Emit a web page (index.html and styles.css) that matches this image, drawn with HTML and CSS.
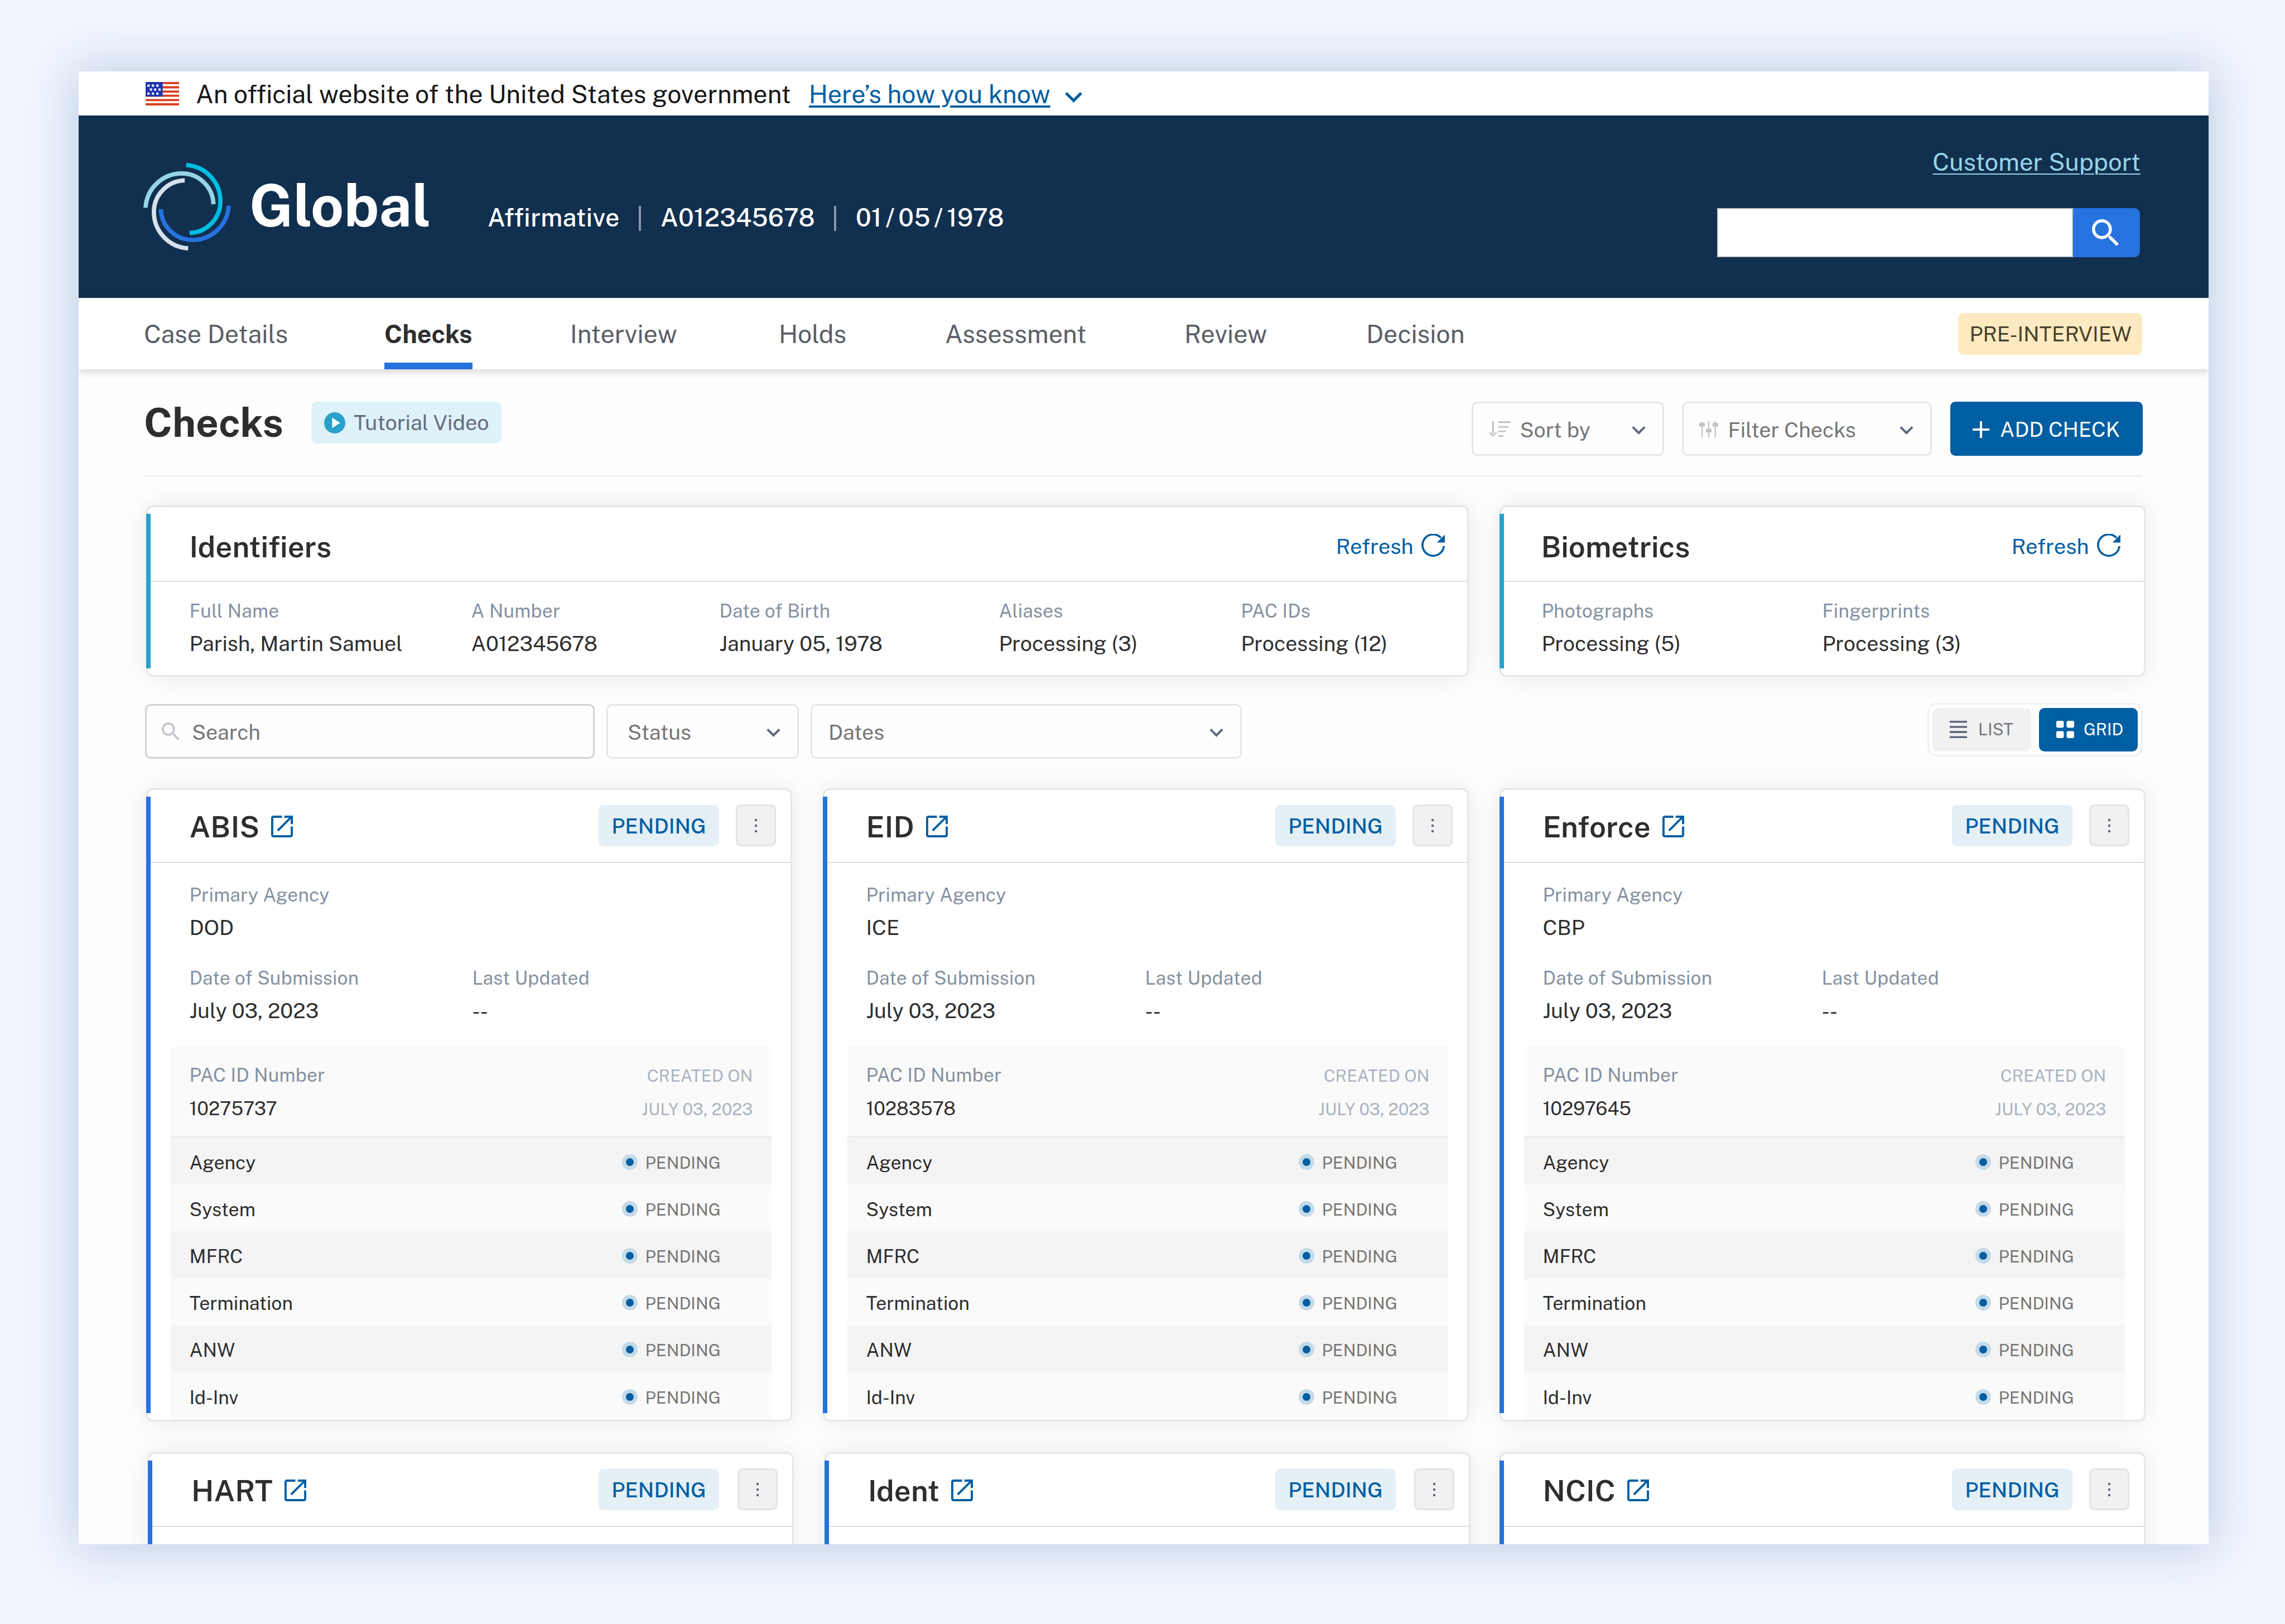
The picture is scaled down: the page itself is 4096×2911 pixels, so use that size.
FILE: index.html
```html
<!DOCTYPE html>
<html lang="en">
<head>
<meta charset="utf-8">
<title>Global – Checks</title>
<link rel="stylesheet" href="styles.css">
</head>
<body>
<svg class="defs" width="0" height="0" aria-hidden="true">
  <symbol id="chevron" viewBox="6 8.59 12 7.41"><path d="M16.59 8.59 12 13.17 7.41 8.59 6 10l6 6 6-6z"/></symbol>
  <symbol id="search" viewBox="3 3 17.49 17.49"><path d="M15.5 14h-.79l-.28-.27A6.47 6.47 0 0 0 16 9.5 6.5 6.5 0 1 0 9.5 16c1.61 0 3.09-.59 4.23-1.57l.27.28v.79l5 4.99L20.49 19l-4.99-5zm-6 0C7.01 14 5 11.99 5 9.5S7.01 5 9.5 5 14 7.01 14 9.5 11.99 14 9.5 14z"/></symbol>
  <symbol id="launch" viewBox="3 3 18 18"><path d="M19 19.200H4.800V4.800H12V3H5a2 2 0 0 0-2 2v14a2 2 0 0 0 2 2h14c1.1 0 2-.9 2-2v-7h-1.800v7zM14 3v1.800h3.790l-10 10 1.270 1.270 10.140-10.140V10H21V3h-7z"/></symbol>
  <symbol id="refresh" viewBox="0 0 46 46"><path d="M38.5 7.7A21 21 0 1 0 44 24" fill="none" stroke="currentColor" stroke-width="4"/><path d="M46 1.3V17H30.3z"/></symbol>
  <symbol id="stripes" viewBox="0 0 60 42">
    <path fill="#fff" d="M0 0h60v42H0z"/>
    <path fill="#db3e1f" d="M0 0h60v3.8H0zM0 7.6h60v3.8H0zM0 15.2h60V19H0zM0 22.8h60v3.8H0zM0 30.4h60v3.8H0zM0 38h60v4H0z"/>
    <path fill="#1e33b1" d="M0 0h30.5v26H0z"/>
    <path fill="#fff" d="M3.2 4.5h4v4h-4zM11.2 4.5h4v4h-4zM19.2 4.5h4v4h-4zM7.6 11.5h4v4h-4zM15.2 11.5h4v4h-4zM23 11.5h4v4h-4zM3.2 18.7h4v4h-4zM11.2 18.7h4v4h-4zM19.2 18.7h4v4h-4z"/>
  </symbol>
  <symbol id="arc" viewBox="0 0 175.4 175.4"><path d="M85.6 4.4A72.6 72.6 0 0 1 154.3 77 63.3 63.3 0 0 1 92.6 140.3" fill="none" stroke="currentColor" stroke-width="8.6"/></symbol>
</svg>

<div class="window">
  <div class="banner">
    <svg class="flag"><use href="#stripes"/></svg>
    <span>An official website of the United States government</span>
    <a class="banner-link">Here’s how you know</a>
    <svg class="chevron banner-chevron"><use href="#chevron"/></svg>
  </div>

  <header class="header">
    <svg class="logo" viewBox="0 0 175.4 175.4">
      <g color="#00bde3"><use href="#arc" width="175.4" height="175.4"/></g>
      <g color="#97d4ea" transform="rotate(-90 87.7 87.7)"><use href="#arc" width="175.4" height="175.4"/></g>
      <g color="#d5e1ed" transform="rotate(180 87.7 87.7)"><use href="#arc" width="175.4" height="175.4"/></g>
      <g color="#2672de" transform="rotate(90 87.7 87.7)"><use href="#arc" width="175.4" height="175.4"/></g>
    </svg>
    <div class="brand">Global</div>
    <div class="meta"><span>Affirmative</span><i></i><span>A012345678</span><i></i><span>01<b>/</b>05<b>/</b>1978</span></div>
    <div class="tools">
      <a class="support">Customer Support</a>
      <div class="site-search"><div class="site-input"></div><div class="site-button"><svg><use href="#search"/></svg></div></div>
    </div>
  </header>

  <nav class="nav">
    <div class="tabs">
      <a>Case Details</a><a class="active">Checks</a><a>Interview</a><a>Holds</a><a>Assessment</a><a>Review</a><a>Decision</a>
    </div>
    <span class="stage">PRE-INTERVIEW</span>
  </nav>

  <main class="main">
    <div class="heading">
      <h1>Checks</h1>
      <a class="tutorial"><svg viewBox="0 0 38 38"><circle cx="19" cy="19" r="19" fill="#29a1cd"/><path fill="#fff" d="M14.5 9.5 28.5 19l-14 9.5z"/></svg>Tutorial Video</a>
      <div class="controls">
        <div class="select sort"><svg class="sort-icon" viewBox="129 135 129 96"><path d="M147.500 135h11v76h-11zM185 135h73v10.500h-73zM185 164h60v10.500h-60zM185 191h45v10.500h-45zM185 219h31v10.500h-31z"/><path d="M132 203l21 21 21-21" fill="none" stroke="#c2c6ca" stroke-width="9"/></svg><span>Sort by</span><svg class="chevron"><use href="#chevron"/></svg></div>
        <div class="select filter"><svg class="filter-icon" viewBox="1387 132 114 99"><path d="M1400 132h8v99h-8zM1440 132h8v99h-8zM1480 132h8v99h-8z"/><rect x="1387" y="142" width="34" height="23" rx="4"/><rect x="1427" y="177" width="34" height="23" rx="4"/><rect x="1467" y="142" width="34" height="23" rx="4"/></svg><span>Filter Checks</span><svg class="chevron"><use href="#chevron"/></svg></div>
        <div class="add"><svg viewBox="0 0 30 30"><path d="M13 0h4v13h13v4H17v13h-4V17H0v-4h13z"/></svg>ADD CHECK</div>
      </div>
    </div>

    <div class="summary">
      <section class="card info ids">
        <div class="info-head"><h2>Identifiers</h2><a class="refresh">Refresh<svg><use href="#refresh"/></svg></a></div>
        <div class="info-body">
          <dl><dt>Full Name</dt><dd>Parish, Martin Samuel</dd></dl>
          <dl><dt>A Number</dt><dd>A012345678</dd></dl>
          <dl><dt>Date of Birth</dt><dd>January 05, 1978</dd></dl>
          <dl><dt>Aliases</dt><dd>Processing (3)</dd></dl>
          <dl><dt>PAC IDs</dt><dd>Processing (12)</dd></dl>
        </div>
      </section>
      <section class="card info bio">
        <div class="info-head"><h2>Biometrics</h2><a class="refresh">Refresh<svg><use href="#refresh"/></svg></a></div>
        <div class="info-body">
          <dl><dt>Photographs</dt><dd>Processing (5)</dd></dl>
          <dl><dt>Fingerprints</dt><dd>Processing (3)</dd></dl>
        </div>
      </section>
    </div>

    <div class="bar">
      <div class="search"><svg><use href="#search"/></svg><span>Search</span></div>
      <div class="select status"><span>Status</span><svg class="chevron"><use href="#chevron"/></svg></div>
      <div class="select dates"><span>Dates</span><svg class="chevron"><use href="#chevron"/></svg></div>
      <div class="toggle">
        <div class="view"><svg viewBox="0 0 31 31"><path d="M0 0h31v3.600H0zM0 9.200h31v3.600H0zM0 18.300h31v3.600H0zM0 27.400h31V31H0z"/></svg>LIST</div>
        <div class="view on"><svg viewBox="0 0 32 31"><rect width="13.500" height="12.500" rx="3"/><rect x="18.500" width="13.500" height="12.500" rx="3"/><rect y="18.500" width="13.500" height="12.500" rx="3"/><rect x="18.500" y="18.500" width="13.500" height="12.500" rx="3"/></svg>GRID</div>
      </div>
    </div>

    <div class="cards" id="cards"></div>
  </main>
</div>
<script src="cards.js"></script>
</body>
</html>
```

FILE: styles.css
```css
* { box-sizing: border-box; }
body {
  margin: 0;
  height: 2911px;
  padding-top: 128px;
  overflow: hidden;
  background: #eff4fd;
  font-family: "Public Sans", Inter, "Liberation Sans", sans-serif;
  font-size: 37.5px;
  line-height: 44px;
  color: #2e2e2e;
}
h1, h2, dl, dt, dd { margin: 0; font-weight: inherit; }
svg { display: block; flex: none; fill: currentColor; }
span, a { white-space: nowrap; }
.defs { position: absolute; }

.window {
  width: 3818px;
  height: 2640px;
  margin-left: 141px;
  overflow: hidden;
  background: #fefefe;
  box-shadow: 0 0 80px rgba(0, 71, 146, .24);
}

.banner {
  height: 79px;
  padding: 2px 0 0 120px;
  display: flex;
  align-items: center;
  background: #fff;
  font-size: 44.7px;
  color: #171717;
}
.flag { width: 60px; height: 42px; margin: -1px 30px 0 0; }
.banner-link {
  margin: 0 26px 0 32px;
  color: #005ea2;
  text-decoration: underline;
  text-decoration-thickness: 4px;
  text-underline-offset: 4px;
}
.chevron { width: 25px; height: 15px; margin: 4px 0 0 auto; color: #5f6780; }
.banner .banner-chevron { width: 31px; height: 19px; margin: 11px 0 0; color: #005ea2; }

.header {
  height: 327px;
  padding: 0 123px 0 116px;
  display: flex;
  align-items: flex-start;
  background: #112f4e;
  color: #fff;
}
.logo { width: 157px; height: 157px; margin: 85px 33px 0 0; overflow: visible; }
.brand { width: 427px; margin-top: 109px; font-size: 103.8px; line-height: 104px; font-weight: 700; }
.meta {
  margin-top: 160px;
  display: flex;
  align-items: center;
  gap: 34.500px;
  font-size: 44.7px;
  line-height: 45px;
  font-weight: 500;
  letter-spacing: .35px;
}
.meta i { width: 4px; height: 45px; margin-top: 2px; background: #8897a7; }
.meta b { font-weight: 500; margin: 0 6.500px; }
.tools { width: 758px; margin: 62px 0 0 auto; display: flex; flex-direction: column; align-items: flex-end; gap: 60px; }
.support {
  font-size: 43.6px;
  line-height: 44px;
  margin-right: -1px;
  color: #97d4ea;
  text-decoration: underline;
  text-decoration-thickness: 2px;
  text-underline-offset: 5px;
}
.site-search { width: 100%; height: 88px; display: flex; }
.site-input { flex: 1; background: #fff; border: 2px solid #c9c9c9; }
.site-button { width: 120px; padding-left: 34px; display: flex; align-items: center; background: #2672de; border-radius: 0 10px 10px 0; }
.site-button svg { width: 48px; height: 48px; }

.nav {
  position: relative;
  height: 128px;
  padding: 0 119px 0 117px;
  display: flex;
  justify-content: space-between;
  align-items: center;
  background: #fff;
  box-shadow: 0 6px 12px rgba(0, 0, 0, .14);
}
.tabs {
  height: 128px;
  display: grid;
  grid-template-columns: 431px 333px 374px 298px 429px 326px auto;
  justify-items: start;
  font-size: 44.8px;
  line-height: 45px;
  color: #5a5e68;
}
.tabs a { padding-top: 42px; }
.tabs .active { font-weight: 700; color: #2e2e2e; border-bottom: 12px solid #2672de; }
.stage {
  height: 75px;
  padding: 0 19px 0 20.500px;
  font-size: 37.6px;
  line-height: 75px;
  background: #feeac1;
  color: #47412b;
  border-radius: 10px;
}

.main { padding: 0 119px 0 117px; }
.heading { height: 192px; padding-top: 58px; display: flex; align-items: flex-start; border-bottom: 2px solid #e6e6e6; }
h1 { width: 300px; margin-top: 1px; font-size: 71px; line-height: 73px; font-weight: 700; }
.tutorial {
  height: 75px;
  padding: 0 22px 0 23px;
  display: flex;
  align-items: center;
  gap: 15px;
  border-radius: 10px;
  background: #dff1f9;
  color: #646a80;
  font-size: 37.8px;
}
.tutorial svg { width: 38px; height: 38px; }
.controls { margin: 0 -1px 0 auto; display: flex; }
.select {
  height: 97px;
  display: flex;
  align-items: center;
  padding: 2px 30px 0 28px;
  border: 3px solid #e6e6e6;
  border-radius: 10px;
  background: #fefefe;
  color: #757575;
}
.sort { width: 345px; margin-right: 31.500px; }
.filter { width: 448px; margin-right: 33.500px; }
.sort-icon { width: 38.500px; height: 28.700px; margin-right: 17px; color: #c2c6ca; }
.filter-icon { width: 34px; height: 29.500px; margin-right: 18px; color: #c2c6ca; }
.add {
  width: 345px;
  height: 97px;
  padding: 2px 0 0 40px;
  display: flex;
  align-items: center;
  gap: 19px;
  border-radius: 9px;
  background: #005ea2;
  color: #fff;
  font-size: 37.2px;
}
.add svg { width: 30px; height: 30px; }

.summary, .cards {
  margin: 51.500px -5.500px 0 3.500px;
  display: grid;
  grid-template-columns: repeat(3, 1158px);
  justify-content: space-between;
}
.card {
  position: relative;
  border: 3px solid #e6e6e6;
  border-radius: 12px;
  background: #fff;
  box-shadow: 0 0 48px rgba(0, 0, 0, .09);
}
.card::before { content: ""; position: absolute; left: -3px; top: 12px; bottom: 12px; width: 8px; background: #2672de; }
.info { height: 307px; }
.info::before { background: #29a1cd; }
.ids { grid-column: span 2; }
.info-head {
  height: 134px;
  padding: 10px 40px 0 75px;
  display: flex;
  justify-content: space-between;
  align-items: center;
  border-bottom: 2px solid #dcdee0;
}
.bio .info-head { padding: 10px 42px 0 72px; }
h2 { font-size: 52.6px; line-height: 60px; font-weight: 600; letter-spacing: .05px; }
.refresh { display: flex; align-items: center; gap: 14px; color: #005ea2; font-size: 38.2px; }
.refresh svg { width: 42px; height: 42px; margin-top: -4px; }
.info-body { padding: 32px 0 0 75px; display: grid; grid-template-columns: 505px 445px 501px 434px auto; }
.bio .info-body { padding-left: 73px; grid-template-columns: 503px auto; }
dt { margin-bottom: 16px; font-size: 33.6px; line-height: 40px; letter-spacing: .2px; color: #8591a0; }
dd { white-space: nowrap; }

.bar { height: 98px; margin: 49px -1px 0 2px; display: flex; }
.search {
  width: 806px;
  padding: 3px 0 0 27px;
  display: flex;
  align-items: center;
  gap: 22px;
  border: 3px solid #d1d1d1;
  border-radius: 10px;
  color: #757575;
}
.search svg { width: 32px; height: 32px; margin-top: -2px; color: #c2c6ca; }
.bar .select { height: 98px; }
.status { width: 345px; margin: 0 21px; padding-left: 35px; }
.bar .dates { width: 773px; padding-left: 29px; }
.toggle {
  width: 386px;
  height: 96px;
  margin: -2px 0 0 auto;
  padding: 0 6px;
  display: flex;
  justify-content: space-between;
  align-items: center;
  border: 3px solid #f1f1f1;
  border-radius: 16px;
}
.view {
  width: 177px;
  height: 78px;
  padding: 1px 0 0 31px;
  display: flex;
  align-items: center;
  gap: 20px;
  border-radius: 10px;
  background: #f1f1f1;
  color: #757575;
  font-size: 29.8px;
}
.view svg { width: 31px; height: 31px; margin-top: -1px; color: #5f6780; }
.view.on { gap: 17px; background: #005ea2; color: #fff; }
.view.on svg { width: 32px; color: #fff; }

.cards { margin-top: 53.500px; row-gap: 55px; }
.check { height: 1135px; overflow: visible; }
.check-head {
  height: 131px;
  padding: 2px 26px 0 75px;
  display: flex;
  align-items: center;
  border-bottom: 2px solid #dcdee0;
}
.launch { width: 39px; height: 39px; margin: 0 auto 0 21px; color: #005ea2; }
.pending {
  width: 216px;
  height: 74px;
  margin: -4px 29.500px 0 0;
  line-height: 74px;
  text-align: center;
  border-radius: 9px;
  background: #e4eff6;
  color: #005ea2;
  font-weight: 500;
}
.menu {
  width: 72px;
  height: 75px;
  margin-top: -4px;
  display: flex;
  flex-direction: column;
  align-items: center;
  justify-content: center;
  gap: 6px;
  border: 3px solid #e2e4e7;
  border-radius: 9px;
  background: #f1f1f1;
}
.menu i { width: 4px; height: 4px; background: #636980; }
.facts { height: 329px; padding: 37px 0 0 75px; display: grid; grid-template-columns: 500px auto; grid-template-rows: 100px 100px; align-content: start; row-gap: 49px; }
.check:first-child .facts { grid-template-columns: 507px auto; }
.facts .agency { grid-column: span 2; }
.pac { margin: 0 34px 0 41px; background: #fafafa; }
.pac-head { height: 163px; padding: 31px 33px 0 34px; display: flex; justify-content: space-between; border-bottom: 2px solid #e6e6e6; }
.pac-head dt { margin-bottom: 20px; }
.pac-head dd { font-size: 33.8px; line-height: 40px; }
.pac-head .created { text-align: right; padding-top: 1px; }
.created dt, .created dd { font-size: 30.4px; letter-spacing: 0; color: #aab3bf; }
.row { height: 84.200px; padding: 5px 0 0 34px; display: grid; grid-template-columns: 775px auto; align-items: center; font-size: 33.8px; }
.row:nth-child(even) { background: #f4f4f4; }
.state { display: flex; align-items: center; gap: 14px; color: #757575; font-size: 30.2px; }
.dot { width: 28px; height: 28px; border: 7px solid #c5dae8; border-radius: 50%; background: #005ea2; margin-top: -2px; }
.shifted { margin: 0 -3.500px 0 3.500px; }
.shifted .pending { margin-right: 33px; }
```

FILE: cards.js
```js
const checks = [
  { name: 'ABIS', agency: 'DOD', pac: '10275737' },
  { name: 'EID', agency: 'ICE', pac: '10283578' },
  { name: 'Enforce', agency: 'CBP', pac: '10297645' },
  { name: 'HART', shifted: true },
  { name: 'Ident', shifted: true },
  { name: 'NCIC' },
];
const steps = ['Agency', 'System', 'MFRC', 'Termination', 'ANW', 'Id-Inv'];

const field = (label, value, cls = '') => `<dl class="${cls}"><dt>${label}</dt><dd>${value}</dd></dl>`;

const body = (c) => `
  <div class="facts">
    ${field('Primary Agency', c.agency, 'agency')}
    ${field('Date of Submission', 'July 03, 2023')}
    ${field('Last Updated', '--')}
  </div>
  <div class="pac">
    <div class="pac-head">${field('PAC ID Number', c.pac)}${field('CREATED ON', 'JULY 03, 2023', 'created')}</div>
    ${steps.map((s) => `<div class="row"><span>${s}</span><span class="state"><i class="dot"></i>PENDING</span></div>`).join('')}
  </div>`;

document.getElementById('cards').innerHTML = checks.map((c) => `
  <section class="card check${c.shifted ? ' shifted' : ''}">
    <div class="check-head">
      <h2>${c.name}</h2><svg class="launch"><use href="#launch"/></svg>
      <span class="pending">PENDING</span>
      <span class="menu"><i></i><i></i><i></i></span>
    </div>
    ${c.agency ? body(c) : ''}
  </section>`).join('');
```
